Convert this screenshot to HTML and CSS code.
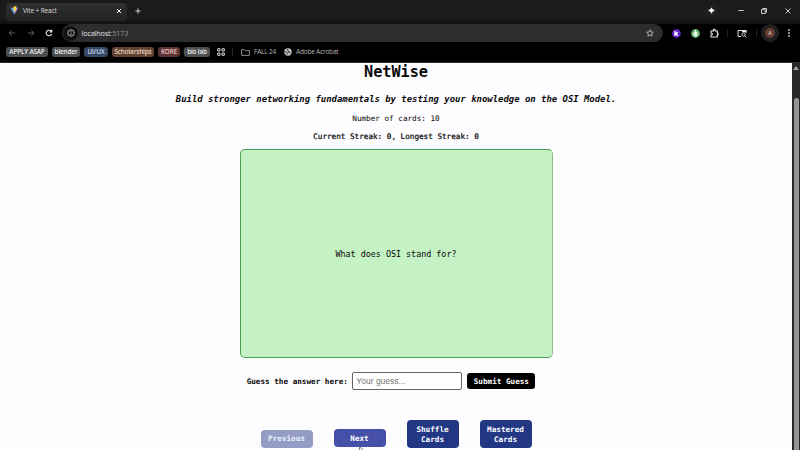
FILE: index.html
```html
<!DOCTYPE html>
<html lang="en">
<head>
<meta charset="utf-8">
<title>Vite + React</title>
<link rel="stylesheet" href="styles.css">
</head>
<body>
<header class="browser">
  <div class="tabs">
    <div class="tab">
      <svg class="vite" viewBox="0 0 10 10"><path d="M.5 1.8 5 9.5 9.5 1.8 5.5 2.5Z" fill="#9a62e8"/><path d="M.5 1.8 5 9.5V3Z" fill="#4aaeed"/><path d="M3.8.5 7.4 0 6.7 3 7.8 2.8 5 7.7 5.2 5 3.7 5.2Z" fill="#ffd54c"/></svg>
      <span class="tab-title">Vite + React</span>
      <svg class="i6 tab-close" viewBox="0 0 6 6"><path d="M1 1 5 5M5 1 1 5"/></svg>
    </div>
    <svg class="i6 plus" viewBox="0 0 6 6"><path d="M3 .4V5.6M.4 3H5.6"/></svg>
    <div class="window">
      <span class="spark"><svg viewBox="0 0 8 8"><path d="M4 .2Q4.7 3.3 7.8 4 4.7 4.7 4 7.8 3.3 4.7.2 4 3.3 3.3 4 .2Z" fill="#fff"/></svg></span>
      <svg class="i6 min" viewBox="0 0 6 6"><path d="M.3 2.5H5.7"/></svg>
      <svg class="i6 max" viewBox="0 0 6 6"><path d="M.5 1.7H4.3V5.5H.5ZM1.7 1.5V.5H5.5V4.3H4.5"/></svg>
      <svg class="i6 close" viewBox="0 0 6 6"><path d="M.5.5 5.5 5.5M5.5.5.5 5.5"/></svg>
    </div>
  </div>
  <div class="toolbar">
    <svg class="i8 dim" viewBox="0 0 8 8"><path d="M7.3 4H1M3.8 1.2 1 4 3.8 6.8"/></svg>
    <svg class="i8 dim" viewBox="0 0 8 8"><path d="M.7 4H7M4.2 1.2 7 4 4.2 6.8"/></svg>
    <svg class="i8" viewBox="0 0 8 8"><path d="M6.6 5A2.8 2.8 0 1 1 6.2 2.3M6.8.8V3H4.6" stroke-width="1.1"/></svg>
    <div class="address">
      <span class="info"><svg viewBox="0 0 8 8"><circle cx="4" cy="4" r="3.2"/><path d="M4 3.6V5.8M4 2.1V2.9"/></svg></span>
      <span class="url">localhost<span class="port">:5173</span></span>
      <svg class="star" viewBox="0 0 8 8"><path d="M4 .7 5 3 7.4 3.2 5.6 4.8 6.1 7.2 4 5.9 1.9 7.2 2.4 4.8.6 3.2 3 3Z"/></svg>
    </div>
    <div class="tools">
      <svg class="t9" viewBox="0 0 9 9"><circle cx="4.5" cy="4.5" r="4.4" fill="#641fc8"/><path d="M3 2V6.8M3.2 5 5.9 3.2M3.6 4.6 5.9 6.8" stroke="#fff" stroke-width="1.4"/></svg>
      <svg class="t9" viewBox="0 0 9 9"><circle cx="4.5" cy="4.5" r="4.4" fill="#63b36b"/><rect x="2.4" y="2.4" width="4.2" height="5" rx="1.6" fill="#e4f7df"/><path d="M4.5 1V4" stroke="#e4f7df"/></svg>
      <svg class="t9 puzzle" viewBox="0 0 9 9"><path d="M1 2H3.3V1.3A.9.9 0 0 1 5.1 1.3V2H7.3V4H8V5.6H7.3V8H1V6Q2.6 5.8 2.5 5 2.5 4.1 1 4Z" stroke="#e6e6e6" stroke-width="1.1"/></svg>
      <i class="sep"></i>
      <svg class="t10" viewBox="0 0 10 9"><path d="M4 7.5H1V1.5H9V4" stroke="#e4e4e4"/><path d="M5 1H9.4V3.2H5Z" fill="#e4e4e4"/><circle cx="6.5" cy="5.5" r="1.6" stroke="#e4e4e4"/><path d="M7.7 6.7 9.2 8.3" stroke="#e4e4e4"/></svg>
      <i class="sep sep2"></i>
      <span class="avatar"><b>A</b></span>
      <svg class="dots" viewBox="0 0 2 8"><path d="M.2.2H1.8V1.8H.2ZM.2 3.2H1.8V4.8H.2ZM.2 6.2H1.8V7.8H.2Z" fill="#eee"/></svg>
    </div>
  </div>
  <nav class="bookmarks">
    <span class="chip apply">APPLY ASAP</span>
    <span class="chip blender">blender</span>
    <span class="chip uiux">UI/UX</span>
    <span class="chip scholar">Scholarships</span>
    <span class="chip kore">KORE</span>
    <span class="chip bio">bio lab</span>
    <svg class="apps" viewBox="0 0 8 8"><path d="M.7.7H3V3H.7ZM5 .7H7.3V3H5ZM.7 5H3V7.3H.7ZM5 5H7.3V7.3H5Z"/></svg>
    <i class="bar"></i>
    <svg class="folder" viewBox="0 0 9 7"><path d="M.6.6H3.4L4.3 1.6H8.4V6.4H.6Z"/></svg>
    <span class="link fall">FALL 24</span>
    <svg class="globe" viewBox="0 0 8 8"><circle cx="4" cy="4" r="3.7" fill="#c9c9c9"/><path d="M1 3.5 3 4.3V6.8M3.6 1 3.5 2.4 5.2 3.2 4.5 4.4 6.6 5" stroke="#222" stroke-width=".9" fill="none"/></svg>
    <span class="link adobe">Adobe Acrobat</span>
  </nav>
</header>
<div class="viewport">
  <main class="page">
    <h1>NetWise</h1>
    <h2>Build stronger networking fundamentals by testing your knowledge on the OSI Model.</h2>
    <p class="count">Number of cards: 10</p>
    <p class="streak">Current Streak: 0, Longest Streak: 0</p>
    <section class="card">What does OSI stand for?</section>
    <form class="guess">
      <label for="guess">Guess the answer here:</label>
      <input id="guess" type="text" placeholder="Your guess...">
      <button class="submit" type="button">Submit Guess</button>
    </form>
    <div class="actions">
      <button class="previous" type="button">Previous</button>
      <button class="next" type="button">Next
        <svg class="cursor" viewBox="0 0 6 9"><path d="M.5.3V8L2.2 6.2 3.4 8.8 4.6 8.2 3.5 5.8H5.8Z" fill="#eee" stroke="#555" stroke-width=".7"/></svg>
      </button>
      <button class="tall" type="button">Shuffle<br>Cards</button>
      <button class="tall" type="button">Mastered<br>Cards</button>
    </div>
  </main>
  <aside class="scroll"><svg viewBox="0 0 8 6"><path d="M1.3 5 4 1 6.7 5Z" fill="#a5a5a5"/></svg><i class="thumb"></i></aside>
</div>
</body>
</html>
```
FILE: styles.css
```css
* { box-sizing: border-box; }
body { margin: 0; width: 800px; height: 450px; overflow: hidden; background: #fdfcfe; font-family: "Open Sans", sans-serif; }
svg { display: block; flex: none; fill: none; overflow: visible; }
i { flex: none; }

.browser { height: 63px; background: #000; border-bottom: 1px solid #292929; color: #ddd; }
.tabs { height: 24px; display: flex; align-items: flex-start; background: linear-gradient(#1b1b1b 0 18px, #101010); }
.tab { height: 18px; width: 121px; margin: 3px 0 0 6px; border-radius: 4px; background: linear-gradient(#303031, #232324); display: flex; align-items: center; padding: 0 5px 3px 4px; }
.vite { width: 9px; height: 9px; }
.tab-title { margin-left: 4px; font-size: 6.4px; line-height: 9px; letter-spacing: -.08px; white-space: nowrap; }
.i6 { width: 6px; height: 6px; stroke: #ddd; stroke-width: .9; }
.tab-close { stroke: #fff; stroke-width: 1; margin-left: auto; }
.plus { margin: 7.5px 0 0 7.5px; }
.window { margin-left: auto; display: flex; align-items: center; padding: 4px 9px 0 0; }
.spark { width: 13px; height: 13px; border-radius: 50%; background: #202020; padding: 3px; }
.spark svg { width: 7px; height: 7px; }
.min { margin-left: 20px; }
.max { margin-left: 17px; }
.close { margin-left: 18px; }

.toolbar { height: 18px; display: flex; align-items: center; padding-left: 8px; }
.i8 { width: 8px; height: 8px; margin-right: 11px; stroke: #eee; stroke-width: .8; }
.i8.dim { stroke: #737373; }
.i8 + .i8 { margin-right: 10px; }
.address { width: 601px; height: 18px; margin-left: -1px; border-radius: 9px; background: #2c2d2e; display: flex; align-items: center; padding: 0 9px 0 1px; }
.info { width: 15px; height: 15px; border-radius: 50%; background: #121212; padding: 3.5px; margin-left: 0; }
.info svg { width: 8px; height: 8px; stroke: #d4d4d4; stroke-width: .8; }
.url { margin-left: 3.5px; font-size: 7.2px; line-height: 12px; letter-spacing: -.12px; color: #e3e3e3; }
.port { color: #929292; }
.star { width: 8px; height: 8px; margin-left: auto; stroke: #c5c5c5; stroke-width: .8; }
.tools { flex: 1; display: flex; align-items: center; padding-left: 9px; }
.t9 { width: 9px; height: 9px; margin-right: 10px; }
.t9.puzzle { margin-right: 8px; }
.t10 { width: 10px; height: 9px; }
.sep { width: 1px; height: 8px; background: #252525; margin-right: 9px; }
.sep2 { margin: 0 4px 0 9px; }
.avatar { width: 18px; height: 18px; flex: none; border-radius: 50%; background: #202020; padding: 4px; }
.avatar b { display: block; width: 10px; height: 10px; border-radius: 50%; background: #653d33; color: #ddc9c0; font-size: 5px; line-height: 10px; font-weight: 600; text-align: center; }
.dots { width: 2px; height: 8px; margin-left: 9px; }

.bookmarks { height: 20px; display: flex; align-items: center; padding-left: 6px; }
.chip { height: 10px; flex: none; border-radius: 3px; margin-right: 4px; line-height: 10px; font-size: 6.4px; text-align: center; color: #f0f0f0; white-space: nowrap; font-weight: 600; letter-spacing: -.16px; }
.apply { width: 42px; background: #4d4f50; }
.blender { width: 28px; background: #4d4f50; }
.uiux { width: 24px; background: #344763; color: #c8d9f1; }
.scholar { width: 42px; background: #604332; color: #edd3c0; }
.kore { width: 22px; background: #5b3333; color: #ecc6c5; }
.bio { width: 26px; background: #4d4f50; margin-right: 7px; }
.apps { width: 8px; height: 8px; stroke: #d5d5d5; stroke-width: 1; }
.bar { width: 1px; height: 8px; background: #292929; margin: 0 8px 0 7px; }
.folder { width: 9px; height: 7px; stroke: #a8a8a8; stroke-width: .8; }
.link { color: #b5b5b5; font-size: 6.5px; line-height: 10px; white-space: nowrap; letter-spacing: -.2px; }
.fall { width: 22px; margin: 0 8px 0 4px; }
.globe { width: 8px; height: 8px; }
.adobe { margin-left: 4px; }

.viewport { height: 387px; display: flex; }
.page { width: 792px; display: flex; flex-direction: column; align-items: center; color: #080808; font-family: "DejaVu Sans Mono", monospace; font-size: 7.65px; }
h1, h2, p { margin: 0; white-space: nowrap; }
h1 { height: 18px; line-height: 18px; font-size: 15.2px; }
h2 { margin-top: 12px; height: 12px; line-height: 12px; font-size: 8.93px; font-style: italic; }
.count { margin-top: 8px; height: 12px; line-height: 12px; }
.streak { margin-top: 6px; height: 12px; line-height: 12px; -webkit-text-stroke: .22px #080808; }
.card { width: 313px; height: 209px; margin-top: 6px; border: 1px solid #48a14f; border-right: 1px dotted #55914f; border-radius: 5px; background: #c5f2c4; display: flex; align-items: center; justify-content: center; font-size: 8.4px; padding-top: 1px; }
.guess { margin: 14px 10px 0 0; display: flex; align-items: center; font-weight: bold; }
.guess input { width: 110px; height: 18px; margin: 0 5px 0 4.5px; border: 1px solid #666; border-radius: 2px; background: #fff; padding: 0 3px; font: 8.5px "Liberation Sans", sans-serif; }
.guess input::placeholder { color: #757575; }
button { font: bold 7.65px/10px "DejaVu Sans Mono", monospace; color: #fff; border: 0; border-radius: 4px; padding: 0; flex: none; }
.submit { width: 68px; height: 16px; background: #000; border-radius: 3px; padding-top: 1px; }
.actions { margin-top: 30px; height: 28px; display: flex; align-items: flex-end; gap: 21px; }
.actions button { width: 52px; height: 18px; padding-top: 1px; }
.actions .previous { background: #939cc5; color: #edf0fb; padding-top: 0; }
.actions .next { background: #4650a9; position: relative; margin-bottom: 1px; }
.actions .tall { height: 28px; background: #223885; }
.cursor { position: absolute; left: 25px; top: 17px; width: 6px; height: 9px; }

.scroll { width: 8px; background: #292929; }
.scroll svg { width: 8px; height: 6px; margin-top: 2px; }
.thumb { display: block; width: 5px; height: 360px; margin: 27px 0 0 2px; border-radius: 3px 3px 0 0; background: #969696; }
```
